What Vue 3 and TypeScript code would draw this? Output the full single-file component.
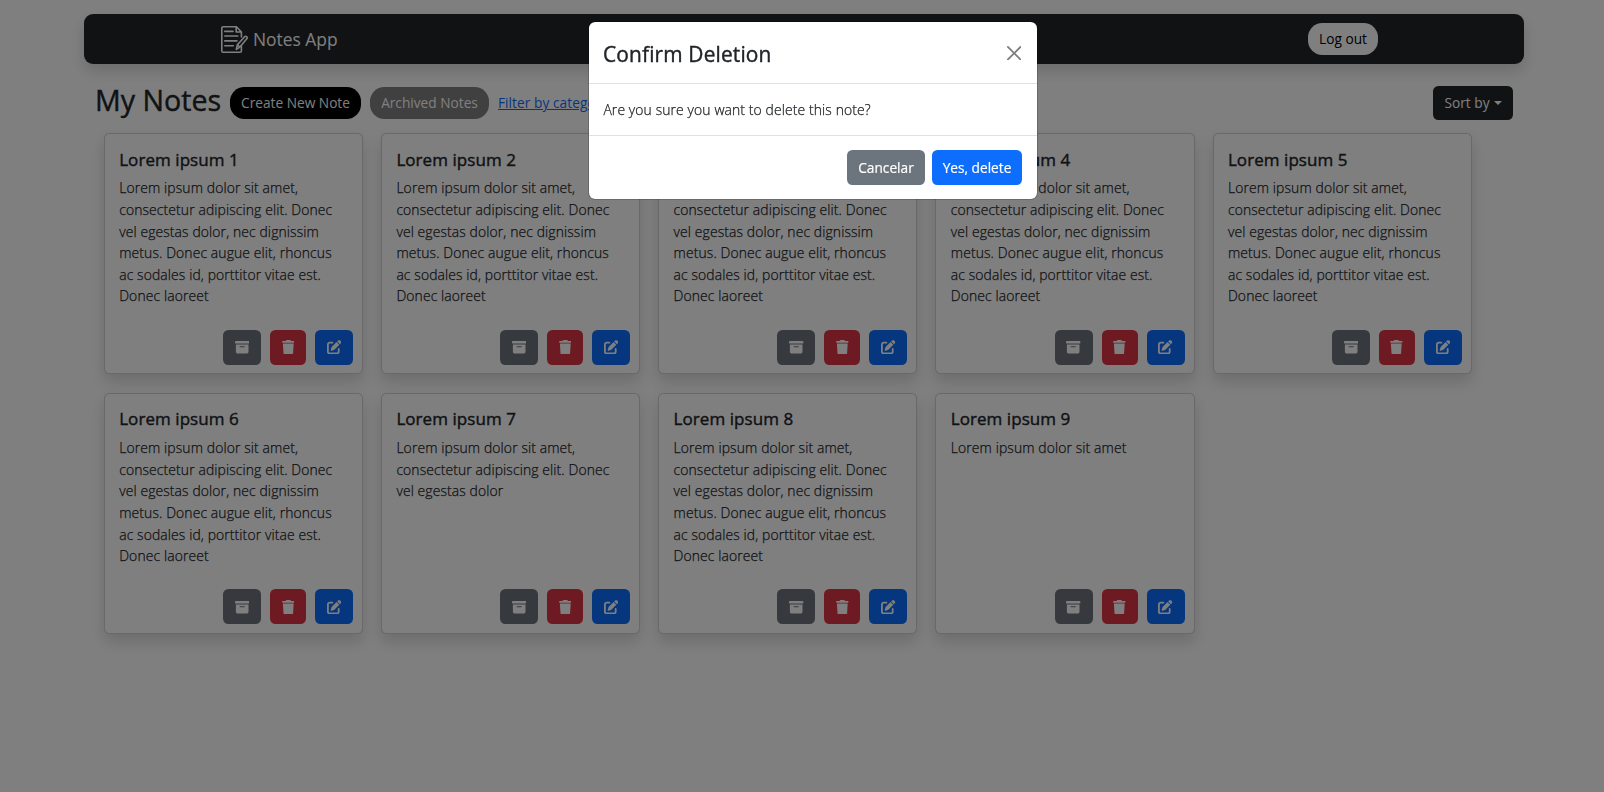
<script setup lang="ts">
import { ref } from 'vue'

interface Note {
  id: number
  title: string
  lines: string[]
}

const full: string[] = [
  'Lorem ipsum dolor sit amet,',
  'consectetur adipiscing elit. Donec',
  'vel egestas dolor, nec dignissim',
  'metus. Donec augue elit, rhoncus',
  'ac sodales id, porttitor vitae est.',
  'Donec laoreet',
]
const medium: string[] = [full[0], full[1], 'vel egestas dolor']
const short: string[] = ['Lorem ipsum dolor sit amet']

const notes = ref<Note[]>(
  [full, full, full, full, full, full, medium, full, short].map((lines, i) => ({
    id: i + 1,
    title: `Lorem ipsum ${i + 1}`,
    lines,
  })),
)

const confirming = ref(true)
const close = (): void => {
  confirming.value = false
}
</script>

<template>
  <div class="page">
    <header class="navbar">
      <div class="brand">
        <svg class="brand-icon" viewBox="0 0 27 27" fill="none" stroke="#fff" stroke-width="1.6" stroke-linejoin="round" stroke-linecap="round">
          <path d="M20.4 11V6L15.4.8H2.1Q.8.8.8 2.1V24.900Q.8 26.200 2.100 26.200H19.100Q20.400 26.200 20.400 24.900V20" />
          <path d="M15.200 1V6H20.200" />
          <path d="M3.800 5.400H12M3.800 10H16.800M3.800 14.900H16M3.800 19.700H12.300" />
          <path d="M15.300 23.400L16.300 18.900L23.600 10.700Q24.600 9.800 25.700 10.700Q26.700 11.700 25.800 12.800L18.900 21.100ZM16.300 18.900L18.900 21.100" />
        </svg>
        <span class="brand-name">Notes App</span>
      </div>
      <button class="pill pill-light">Log out</button>
    </header>

    <section class="toolbar">
      <h2 class="heading">My Notes</h2>
      <button class="pill pill-dark">Create New Note</button>
      <button class="pill pill-gray">Archived Notes</button>
      <a class="filter" href="#">Filter by category</a>
      <button class="btn btn-sort">Sort by<span class="caret"></span></button>
    </section>

    <main class="grid">
      <article v-for="note in notes" :key="note.id" class="card">
        <div class="card-body">
          <h5 class="card-title">{{ note.title }}</h5>
          <p class="card-text">
            <span v-for="line in note.lines" :key="line" class="line">{{ line }}</span>
          </p>
        </div>
        <div class="actions">
          <button class="btn icon-btn secondary" aria-label="Archive">
            <svg viewBox="0 0 512 512" fill="currentColor"><path d="M32 32H480c17.700 0 32 14.300 32 32V96c0 17.700-14.300 32-32 32H32C14.300 128 0 113.700 0 96V64C0 46.300 14.300 32 32 32zm0 128H480V416c0 35.300-28.700 64-64 64H96c-35.300 0-64-28.700-64-64V160zm128 80c0 8.800 7.200 16 16 16H336c8.800 0 16-7.200 16-16s-7.200-16-16-16H176c-8.800 0-16 7.200-16 16z" /></svg>
          </button>
          <button class="btn icon-btn danger" aria-label="Delete">
            <svg class="trash" viewBox="0 0 448 512" fill="currentColor"><path d="M135.200 17.700L128 32H32C14.300 32 0 46.300 0 64S14.300 96 32 96H416c17.700 0 32-14.300 32-32s-14.300-32-32-32H320l-7.200-14.300C307.400 6.800 296.300 0 284.200 0H163.800c-12.100 0-23.200 6.800-28.600 17.700zM416 128H32L53.200 467c1.600 25.300 22.600 45 47.900 45H346.900c25.300 0 46.300-19.700 47.900-45L416 128z" /></svg>
          </button>
          <button class="btn icon-btn primary" aria-label="Edit">
            <svg viewBox="0 0 512 512" fill="currentColor"><path d="M471.600 21.700c-21.900-21.900-57.300-21.900-79.200 0L362.300 51.700l97.900 97.900 30.100-30.100c21.900-21.900 21.900-57.300 0-79.200L471.600 21.700zm-299.200 220c-6.100 6.100-10.800 13.600-13.500 21.900l-29.600 88.800c-2.900 8.600-.6 18.100 5.800 24.600s15.900 8.700 24.600 5.800l88.800-29.600c8.200-2.700 15.700-7.400 21.900-13.500L437.700 172.300 339.700 74.300 172.400 241.700zM96 64C43 64 0 107 0 160V416c0 53 43 96 96 96H352c53 0 96-43 96-96V320c0-17.700-14.300-32-32-32s-32 14.300-32 32v96c0 17.700-14.300 32-32 32H96c-17.700 0-32-14.300-32-32V160c0-17.700 14.300-32 32-32h96c17.700 0 32-14.300 32-32s-14.300-32-32-32H96z" /></svg>
          </button>
        </div>
      </article>
    </main>

    <div v-if="confirming" class="backdrop">
      <div class="modal" role="dialog">
        <div class="modal-header">
          <span class="modal-title">Confirm Deletion</span>
          <button class="close" aria-label="Close" @click="close">
            <svg viewBox="0 0 16 16"><path d="M.293.293a1 1 0 0 1 1.414 0L8 6.586 14.293.293a1 1 0 1 1 1.414 1.414L9.414 8l6.293 6.293a1 1 0 0 1-1.414 1.414L8 9.414l-6.293 6.293a1 1 0 0 1-1.414-1.414L6.586 8 .293 1.707a1 1 0 0 1 0-1.414z" /></svg>
          </button>
        </div>
        <div class="modal-body"><span>Are you sure you want to delete this note?</span></div>
        <div class="modal-footer">
          <button class="btn secondary cancel" @click="close">Cancelar</button>
          <button class="btn primary confirm" @click="close">Yes, delete</button>
        </div>
      </div>
    </div>
  </div>
</template>

<style>
body {
  margin: 0;
  background: #fff;
}
</style>

<style scoped>
* {
  box-sizing: border-box;
}
.page {
  height: 792px;
  overflow: hidden;
  padding: 14px 80px 0 84px;
  font-family: 'Open Sans', 'Noto Sans', sans-serif;
  font-size: 13.7px;
  line-height: 21.6px;
  color: #212529;
}
button {
  font: inherit;
  border: 0;
  padding: 0;
  display: flex;
  align-items: center;
  justify-content: center;
  white-space: nowrap;
}
.navbar {
  height: 50px;
  border-radius: 9px;
  background: #212529;
  box-shadow: 0 7.2px 14.4px rgba(0, 0, 0, 0.15);
  display: flex;
  align-items: center;
  justify-content: space-between;
  padding: 0 146px 0 137px;
}
.brand {
  display: flex;
  align-items: center;
  gap: 5px;
  color: #fff;
}
.brand-icon {
  width: 27px;
  height: 27px;
}
.brand-name {
  padding-top: 2px;
  font-size: 17.4px;
}
.pill {
  height: 32px;
  border-radius: 14.4px;
  color: #fff;
}
.pill-light {
  width: 70px;
  margin-bottom: 1px;
  padding-top: 1px;
  background: #fff;
  color: #000;
}
.pill-dark {
  width: 131px;
  margin-left: 9px;
  background: #000;
}
.pill-gray {
  width: 119px;
  margin-left: 9px;
  background: #808080;
}
.toolbar {
  display: flex;
  align-items: center;
  height: 34px;
  margin: 22px 11px 13px;
  white-space: nowrap;
}
.heading {
  width: 126px;
  margin: -6px 0 0;
  font-size: 28.6px;
  font-weight: 400;
  line-height: 34px;
  -webkit-text-stroke: 0.4px currentColor;
}
.filter {
  margin-left: 9px;
  letter-spacing: 0.05px;
  color: #0d6efd;
}
.btn {
  height: 35px;
  border-radius: 5.4px;
  color: #fff;
}
.btn-sort {
  width: 80px;
  height: 34px;
  margin-left: auto;
  background: #212529;
}
.caret {
  margin-left: 4px;
  border-top: 4.3px solid;
  border-left: 4.3px solid transparent;
  border-right: 4.3px solid transparent;
}
.grid {
  display: grid;
  grid-template-columns: repeat(5, 259.2px);
  gap: 18.3px 18px;
  padding-left: 19.8px;
}
.card {
  height: 241.4px;
  display: flex;
  flex-direction: column;
  justify-content: space-between;
  background: #fff;
  border: 1px solid rgba(0, 0, 0, 0.175);
  border-radius: 5.4px;
  box-shadow: 0 7.2px 14.4px rgba(0, 0, 0, 0.15);
}
.card-body {
  padding: 14.7px 14.4px 0;
}
.card-title {
  margin: 0 0 7.2px;
  font-size: 17px;
  letter-spacing: 0.06px;
  line-height: 21.6px;
  font-weight: 400;
  -webkit-text-stroke: 0.4px currentColor;
}
.card-text,
.modal-body {
  font-size: 13.9px;
  font-weight: 300;
  letter-spacing: 0.12px;
  -webkit-text-stroke: 0.25px currentColor;
}
.card-text {
  margin: 0;
}
.line {
  display: block;
  white-space: nowrap;
}
.actions {
  display: flex;
  justify-content: flex-end;
  gap: 9px;
  padding: 0 9px 8.6px 0;
}
.icon-btn {
  width: 38px;
}
.icon-btn svg {
  width: 14.4px;
  height: 14.4px;
}
.icon-btn .trash {
  width: 12.6px;
}
.secondary {
  background: #6c757d;
}
.danger {
  width: 36px;
  background: #dc3545;
}
.primary {
  background: #0d6efd;
}
.backdrop {
  position: fixed;
  inset: 0;
  display: flex;
  justify-content: center;
  align-items: flex-start;
  padding: 21px 0 0 22px;
  background: rgba(0, 0, 0, 0.5);
}
.modal {
  width: 450px;
  height: 179px;
  border-radius: 7.2px;
  border: 1px solid rgba(0, 0, 0, 0.175);
  background: #fff;
  background-clip: padding-box;
}
.modal-header {
  height: 62px;
  display: flex;
  align-items: center;
  justify-content: space-between;
  padding: 0 16px 0 14px;
  border-bottom: 1px solid #dee2e6;
}
.modal-title {
  padding-top: 3px;
  font-size: 20.9px;
  letter-spacing: 0.15px;
  line-height: 32px;
  -webkit-text-stroke: 0.4px currentColor;
}
.close {
  padding-top: 1px;
  background: transparent;
  opacity: 0.5;
}
.close svg {
  width: 14.4px;
  height: 14.4px;
}
.modal-body {
  height: 51px;
  padding: 15px 14.4px;
}
.modal-footer {
  display: flex;
  justify-content: flex-end;
  gap: 7px;
  padding: 14px 15px 0;
  border-top: 1px solid #dee2e6;
}
.cancel,
.confirm {
  -webkit-text-stroke: 0.2px currentColor;
}
.cancel {
  width: 78px;
}
.confirm {
  width: 90px;
}
</style>
